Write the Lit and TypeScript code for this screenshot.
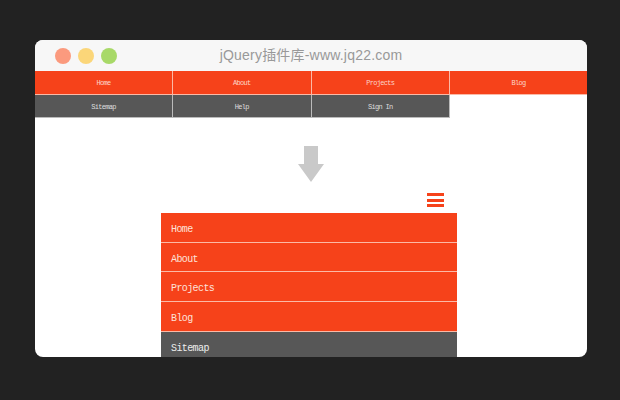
import { LitElement, html, css } from "lit";
import { customElement } from "lit/decorators.js";

const top = ["Home", "About", "Projects", "Blog"];
const second = ["Sitemap", "Help", "Sign In"];
const list = ["Home", "About", "Projects", "Blog", "Sitemap"];

@customElement("app-root")
export class AppRoot extends LitElement {
  static styles = css`
    :host { display: block; width: 620px; height: 400px; background: #222; padding: 40px 33px 43px 35px; box-sizing: border-box; overflow: hidden; }
    .window { height: 317px; background: #fff; border-radius: 8px; overflow: hidden; display: flex; flex-direction: column; }
    .bar { height: 31px; flex: none; background: #f7f7f7; display: grid; grid-template-columns: 1fr auto 1fr; align-items: center; padding: 0 20px; }
    .dots { display: flex; gap: 7px; }
    .dot { width: 16px; height: 16px; border-radius: 50%; }
    .d1 { background: #fb9a7e; } .d2 { background: #fbd679; } .d3 { background: #a8d968; }
    .title { font: 14px/31px "Liberation Sans", "Noto Sans CJK SC", sans-serif; letter-spacing: .2px; color: #999; }
    .nav { display: grid; grid-template-columns: 138px 138.5px 138.5px 137px; flex: none; }
    .cell { height: 23.5px; box-sizing: border-box; border-bottom: 1px solid #fbb9a6; border-right: 1px solid #fbb9a6; background: #f6421a; color: #fcd5c9; font: 7px/25px "Liberation Mono", "Noto Sans CJK SC", monospace; letter-spacing: -.7px; text-align: center; }
    .cell.last { border-right: 0; }
    .cell.gray { background: #575757; color: #ddd; border-color: #bbb; }
    .stage { flex: 1; display: flex; flex-direction: column; align-items: center; min-height: 0; padding-top: 28px; }
    .arrow { display: block; flex: none; }
    .demo { width: 296px; margin: 11px 4px 0 0; }
    .toggle { display: flex; flex-direction: column; gap: 2.5px; width: 17px; margin: 0 13px 6px auto; }
    .toggle i { display: block; height: 3px; background: #f6421a; }
    .item { height: 28.67px; border-bottom: 1px solid #fbb9a6; padding-left: 10px; background: #f6421a; color: #fde3db; font: 10px/33px "Liberation Mono", "Noto Sans CJK SC", monospace; letter-spacing: -.6px; }
    .item.gray { background: #575757; color: #eee; border-bottom: 0; }
  `;

  render() {
    return html`
      <div class="window">
        <div class="bar">
          <div class="dots"><div class="dot d1"></div><div class="dot d2"></div><div class="dot d3"></div></div>
          <div class="title">jQuery插件库-www.jq22.com</div>
          <div></div>
        </div>
        <div class="nav">
          ${top.map((t, i) => html`<div class="cell ${i === 3 ? "last" : ""}">${t}</div>`)}
          ${second.map((t) => html`<div class="cell gray">${t}</div>`)}
        </div>
        <div class="stage">
          <svg class="arrow" width="26" height="36" viewBox="0 0 26 36">
            <path d="M6 0H20V18H26L13 36L0 18H6Z" fill="#c9c9c9" />
          </svg>
          <div class="demo">
            <div class="toggle"><i></i><i></i><i></i></div>
            ${list.map((t, i) => html`<div class="item ${i === 4 ? "gray" : ""}">${t}</div>`)}
          </div>
        </div>
      </div>
    `;
  }
}
